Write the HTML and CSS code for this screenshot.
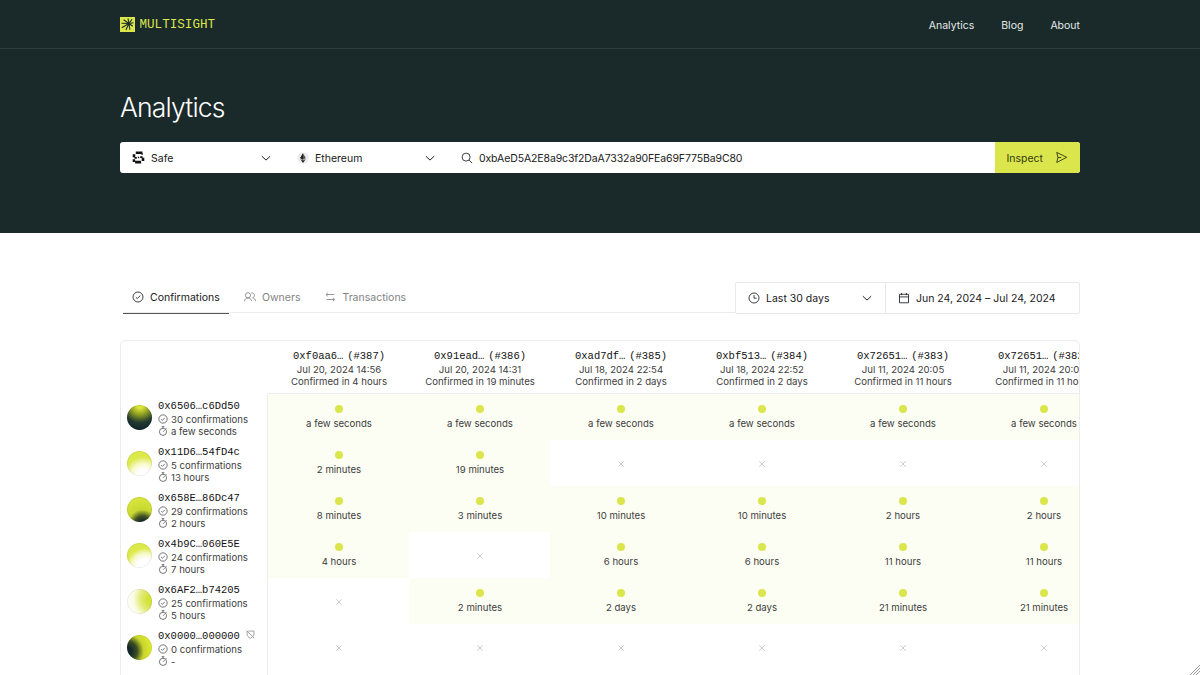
FILE: index.html
```html
<!DOCTYPE html>
<html lang="en">
<head>
<meta charset="utf-8">
<title>Multisight Analytics</title>
<link rel="stylesheet" href="styles.css">
</head>
<body>
<svg class="defs" aria-hidden="true">
  <symbol id="chevron" viewBox="0 0 10 10"><path d="M.8 3.2 5 7.1l4.2-3.9"/></symbol>
  <symbol id="check" viewBox="0 0 12 12"><circle cx="6" cy="6" r="5"/><path d="m3.8 6.2 1.5 1.4 2.9-3"/></symbol>
  <symbol id="timer" viewBox="0 0 12 12"><circle cx="6" cy="7" r="4.3"/><path d="M4.4.8h3.2M6 .9v1.8M6 7l2-2M9.3 2.5l1 1"/></symbol>
  <symbol id="cross" viewBox="0 0 6 6"><path d="m.3.3 5.4 5.4M5.7.3.3 5.7"/></symbol>
</svg>
<div class="hero">
  <header class="header">
    <div class="wrap bar">
      <div class="logo">
        <svg class="logo-mark" viewBox="0 0 15 15"><path class="logo-bg" d="M0 0h15v15H0z"/><path d="m9 6.5-1-5M9 6.5l3-4.3M9 6.5l4.5-.7M9 6.5l3.7 2.7M9 6.5l.8 6.2M9 6.5 5.9 12.9M9 6.5 1.8 10.8M9 6.5 1.5 6.2M9 6.5 3.6 2.7"/></svg>
        <span>MULTISIGHT</span>
      </div>
      <nav class="nav"><a>Analytics</a><a>Blog</a><a>About</a></nav>
    </div>
  </header>
  <div class="wrap">
    <h1 class="title">Analytics</h1>
    <div class="search">
      <div class="select">
        <svg class="safe" viewBox="0 0 13 13"><path d="M3.8.6h6.6v1.6h.5v1.6H9.4V3H3.8zM.7 3.3h2.6v2.8h1.5v1.6H2.4V6.3H.7zM5.8 5.8h1.4v1.4H5.8zM8.2 5.3h2.4v1.4h1.7v3.2H9.7V6.9H8.2zM.7 8.3h2.4v1.5h6v2.6H3.1V11H.7z"/></svg>
        <span>Safe</span><svg class="chev"><use href="#chevron"/></svg>
      </div>
      <div class="select">
        <svg class="eth" viewBox="0 0 12 12"><circle cx="6" cy="6" r="5.8" fill="#ececec"/><path d="m6 1.2 2.8 4.9L6 7.8 3.2 6.1z" fill="#555"/><path d="M6 1.2v6.6L3.2 6.1zM3.3 6.9 6 8.5l2.7-1.6L6 10.9z" fill="#222"/></svg>
        <span>Ethereum</span><svg class="chev"><use href="#chevron"/></svg>
      </div>
      <div class="query">
        <svg class="glass" viewBox="0 0 12 12"><circle cx="5.1" cy="5.1" r="4"/><path d="m8.1 8.1 3 3"/></svg>
        <span>0xbAeD5A2E8a9c3f2DaA7332a90FEa69F775Ba9C80</span>
      </div>
      <div class="inspect"><span>Inspect</span>
        <svg viewBox="0 0 12 12"><path d="M1.6 1.3 10.8 5.8 1.6 10.6 2.7 6zM2.7 6h3"/></svg>
      </div>
    </div>
  </div>
</div>
<main class="wrap">
  <div class="controls">
    <div class="tabs">
      <div class="tab active"><svg viewBox="0 0 12 12"><use href="#check"/></svg><span>Confirmations</span></div>
      <div class="tab owners"><svg viewBox="0 0 12 12"><circle cx="4" cy="4.3" r="2.6"/><path d="M.3 10.2C.9 8 2.2 7 4 7s3.1 1 3.7 3.2M7.2 1.9c3.3-.8 4.5 3.8 1.4 5 1.6 0 2.6 1.2 3.1 3.3"/></svg><span>Owners</span></div>
      <div class="tab transactions"><svg viewBox="0 0 12 12"><path d="M3.8 1.8 2 3.5l1.8 1.7M2 3.5h8.2M8.9 6.8l1.8 1.7-1.8 1.7M10.7 8.5H2.5"/></svg><span>Transactions</span></div>
    </div>
    <div class="range">
      <svg viewBox="0 0 12 12"><circle cx="6" cy="6" r="5"/><path d="M6 3v3.2h2.6"/></svg><span>Last 30 days</span><svg class="chev"><use href="#chevron"/></svg>
    </div>
    <div class="dates">
      <svg viewBox="0 0 12 12"><path d="M1.5 2.3h9v8.5h-9zM1.5 4.9h9M3.6.9v2.3M8.4.9v2.3"/></svg><span>Jun 24, 2024 – Jul 24, 2024</span>
    </div>
  </div>
  <div class="table">
    <div class="grid">
      <div class="corner"></div>
      <div class="th"><b>0xf0aa6… (#387)</b><span>Jul 20, 2024 14:56</span><span>Confirmed in 4 hours</span></div>
      <div class="th"><b>0x91ead… (#386)</b><span>Jul 20, 2024 14:31</span><span>Confirmed in 19 minutes</span></div>
      <div class="th"><b>0xad7df… (#385)</b><span>Jul 18, 2024 22:54</span><span>Confirmed in 2 days</span></div>
      <div class="th"><b>0xbf513… (#384)</b><span>Jul 18, 2024 22:52</span><span>Confirmed in 2 days</span></div>
      <div class="th"><b>0x72651… (#383)</b><span>Jul 11, 2024 20:05</span><span>Confirmed in 11 hours</span></div>
      <div class="th"><b>0x72651… (#382)</b><span>Jul 11, 2024 20:05</span><span>Confirmed in 11 hours</span></div>

      <div class="owner"><i class="avatar a1"></i><div><b>0x6506…c6Dd50</b><p><svg><use href="#check"/></svg>30 confirmations</p><p><svg><use href="#timer"/></svg>a few seconds</p></div></div>
      <div class="yes">a few seconds</div><div class="yes">a few seconds</div><div class="yes">a few seconds</div><div class="yes">a few seconds</div><div class="yes">a few seconds</div><div class="yes">a few seconds</div>

      <div class="owner"><i class="avatar a2"></i><div><b>0x11D6…54fD4c</b><p><svg><use href="#check"/></svg>5 confirmations</p><p><svg><use href="#timer"/></svg>13 hours</p></div></div>
      <div class="yes">2 minutes</div><div class="yes">19 minutes</div><div class="no"><svg><use href="#cross"/></svg></div><div class="no"><svg><use href="#cross"/></svg></div><div class="no"><svg><use href="#cross"/></svg></div><div class="no"><svg><use href="#cross"/></svg></div>

      <div class="owner"><i class="avatar a3"></i><div><b>0x658E…86Dc47</b><p><svg><use href="#check"/></svg>29 confirmations</p><p><svg><use href="#timer"/></svg>2 hours</p></div></div>
      <div class="yes">8 minutes</div><div class="yes">3 minutes</div><div class="yes">10 minutes</div><div class="yes">10 minutes</div><div class="yes">2 hours</div><div class="yes">2 hours</div>

      <div class="owner"><i class="avatar a4"></i><div><b>0x4b9C…060E5E</b><p><svg><use href="#check"/></svg>24 confirmations</p><p><svg><use href="#timer"/></svg>7 hours</p></div></div>
      <div class="yes">4 hours</div><div class="no"><svg><use href="#cross"/></svg></div><div class="yes">6 hours</div><div class="yes">6 hours</div><div class="yes">11 hours</div><div class="yes">11 hours</div>

      <div class="owner"><i class="avatar a5"></i><div><b>0x6AF2…b74205</b><p><svg><use href="#check"/></svg>25 confirmations</p><p><svg><use href="#timer"/></svg>5 hours</p></div></div>
      <div class="no"><svg><use href="#cross"/></svg></div><div class="yes">2 minutes</div><div class="yes">2 days</div><div class="yes">2 days</div><div class="yes">21 minutes</div><div class="yes">21 minutes</div>

      <div class="owner"><i class="avatar a6"></i><div><b>0x0000…000000 <svg class="shield" viewBox="0 0 10 10"><path d="M2.5 1.2h6.3v3.2c0 1.2-.3 2-.9 2.8M6.8 8 5 9.2C2.3 8 1.2 6.5 1.2 4.4V1.2M.6.6l8.6 8.6"/></svg></b><p><svg><use href="#check"/></svg>0 confirmations</p><p><svg><use href="#timer"/></svg>-</p></div></div>
      <div class="no"><svg><use href="#cross"/></svg></div><div class="no"><svg><use href="#cross"/></svg></div><div class="no"><svg><use href="#cross"/></svg></div><div class="no"><svg><use href="#cross"/></svg></div><div class="no"><svg><use href="#cross"/></svg></div><div class="no"><svg><use href="#cross"/></svg></div>
    </div>
  </div>
</main>
<svg class="grip" viewBox="0 0 10 10"><path d="M0 10 10 0M3 10l7-7M6 10l4-4"/></svg>
</body>
</html>
```
FILE: styles.css
```css
* { box-sizing: border-box; }
body {
  margin: 0;
  height: 675px;
  overflow: hidden;
  background: #fff;
  color: #1c2024;
  font: 400 10.5px/14px Inter, sans-serif;
}
svg { fill: none; stroke: currentColor; stroke-width: 0.85; flex: none; }
.defs { position: absolute; width: 0; height: 0; }
.wrap { width: 960px; margin: 0 auto; }

.hero { height: 233px; background: #1a2929; color: #fff; }
.header { height: 49px; border-bottom: 1px solid #2e3d3d; }
.bar { height: 48px; display: flex; align-items: center; justify-content: space-between; }
.logo {
  display: flex;
  align-items: center;
  gap: 4.5px;
  color: #dbe64c;
  font: 400 12.6px/15px "Liberation Mono", monospace;
}
.logo span { padding-top: 2px; }
.logo-mark { width: 15px; height: 15px; stroke: #1b2a2a; stroke-width: 1.1; }
.logo-bg { fill: #dbe64c; stroke: none; }
.nav { display: flex; gap: 27px; padding-top: 4px; color: #e4eaea; }
.title { margin: 40px 0 0; font-size: 26.5px; line-height: 36px; font-weight: 300; letter-spacing: -0.8px; }

.search {
  display: flex;
  height: 31px;
  margin-top: 17px;
  border-radius: 3px;
  overflow: hidden;
  background: #fff;
  color: #202020;
}
.search span, .controls span { padding-top: 2px; }
.select { display: flex; align-items: center; width: 164px; padding: 0 13px 0 12px; gap: 6px; }
.select + .select { padding-left: 13px; }
.chev { width: 10px; height: 10px; margin-left: auto; stroke-width: 1; }
.safe { width: 13px; height: 13px; fill: #111; stroke: none; }
.eth { width: 12px; height: 12px; stroke: none; }
.query { display: flex; align-items: center; flex: 1; gap: 6px; padding-left: 13px; letter-spacing: -0.12px; }
.glass { width: 12px; height: 12px; }
.inspect {
  display: flex;
  align-items: center;
  justify-content: space-between;
  width: 85px;
  padding: 0 12px 0 11.5px;
  background: #dbe64c;
  color: #343b12;
}
.inspect svg { width: 13px; height: 13px; }

.controls { display: flex; height: 31px; margin-top: 49px; padding-left: 3px; }
.tabs { display: flex; flex: 1; border-bottom: 1px solid #ededed; color: #838383; }
.tab { display: flex; align-items: center; gap: 6px; height: 32px; padding: 0 9px 2px; }
.tab svg { width: 12px; height: 12px; }
.active { width: 106px; padding-bottom: 1px; border-bottom: 1px solid #555; color: #202020; }
.owners { padding: 0 15px 2px; }
.range, .dates { display: flex; align-items: center; gap: 6px; height: 32px; border: 1px solid #e8e8e8; }
.range { width: 151px; padding: 0 13px 0 12px; border-radius: 2px 0 0 2px; }
.dates { width: 195px; margin-left: -1px; padding-left: 12px; border-radius: 0 2px 2px 0; }
.range svg, .dates svg { width: 12px; height: 12px; }
.range .chev { width: 10px; height: 10px; }

.table {
  height: 340px;
  margin-top: 27px;
  border: 1px solid #ececec;
  border-radius: 6px;
  overflow: hidden;
  font-size: 9.6px;
  line-height: 12px;
  color: #404040;
}
.grid { display: grid; grid-template-columns: 147px repeat(6, 141px); grid-template-rows: 53px repeat(5, 46px) 56px; }
.grid b {
  display: block;
  margin-bottom: 1px;
  font: 400 10.5px/14px "Liberation Mono", monospace;
  color: #111;
  white-space: pre;
}
.owner { border-right: 1px solid #ededed; }
.th { display: flex; flex-direction: column; align-items: center; padding: 8px 0 0 1px; border-bottom: 1px solid #ededed; }
.th b { word-spacing: -2.5px; }
.owner { display: flex; gap: 6px; padding: 5px 0 0 6px; }
.owner p { display: flex; align-items: center; gap: 3px; margin: 0; }
.owner p svg { width: 10px; height: 10px; margin-bottom: 2px; }
.avatar { width: 25px; height: 25px; margin-top: 6px; border-radius: 50%; box-shadow: inset 0 0 0 1px #00000012; }
.a1 { background: radial-gradient(circle at 52% 0, #d9e537 12%, #8d9d22 35%, #233a31 62%, #12262a 85%); }
.a2 { background: radial-gradient(circle at 65% 100%, #fff 22%, #f7f9c9 42%, #dce94b 64%); }
.a3 { background: radial-gradient(circle at 62% 108%, #14292b 10%, #415223 26%, #c9d830 46%, #d6e43c 80%); }
.a4 { background: radial-gradient(circle at 72% 98%, #fff 28%, #f6f9c7 46%, #dce94b 64%); }
.a5 { background: radial-gradient(circle at 105% 40%, #d3e238 18%, #e1eb73 42%, #fbfce4 66%, #fff 90%); }
.a6 { background: radial-gradient(circle at 0 65%, #13282c 14%, #3c4d22 34%, #c8d42b 56%, #e0eb35 85%); }
.shield { width: 9px; height: 9px; color: #888; }
.yes { display: flex; flex-direction: column; align-items: center; padding: 11px 0 0 1px; background: #fcfef4; color: #3c3c3c; }
.yes::before { content: ""; width: 8px; height: 8px; margin: 0 1px 5px 0; border-radius: 50%; background: #dbe64c; }
.no { display: flex; justify-content: center; padding-top: 20.5px; color: #c4c4c4; }
.no svg { width: 6px; height: 6px; }
.grip { position: absolute; right: 0; bottom: 0; width: 10px; height: 10px; color: #888; }
```
